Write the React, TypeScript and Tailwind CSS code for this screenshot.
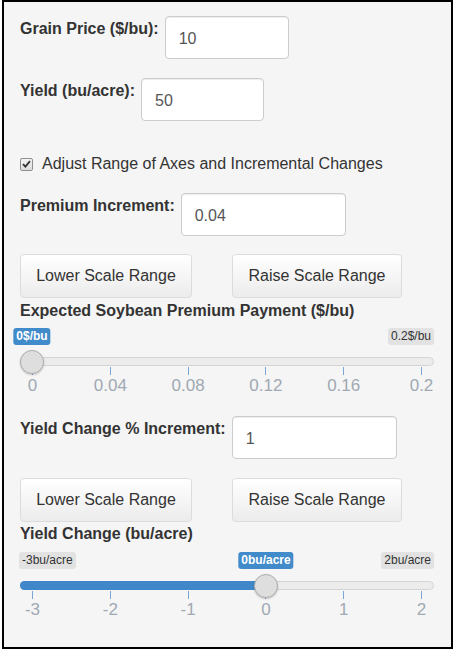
import React from "react";

const FONT = { fontFamily: '"Liberation Sans", Arial, sans-serif' };

// handle travels from 12px to 402px inside a 414px track
const PAD = 12;
const SPAN = 390;

interface FieldRowProps {
  label: string;
  value: string;
  width: string;
  className?: string;
}

function FieldRow({ label, value, width, className = "" }: FieldRowProps) {
  return (
    <div className={`flex items-start gap-[6px] ${className}`}>
      <label className="mt-[3px] text-[16px] leading-[20px] font-bold text-[#333]">{label}</label>
      <div
        className={`h-[43px] ${width} rounded-[4px] border border-[#ccc] bg-white pl-[13px] pt-[2px] flex items-center text-[16px] text-[#555] shadow-[inset_0_1px_1px_rgba(0,0,0,0.075)]`}
      >
        {value}
      </div>
    </div>
  );
}

function ScaleButtons({ className = "" }: { className?: string }) {
  const btn =
    "h-[44px] rounded-[4px] border border-[#dcdcdc] bg-linear-to-b from-white to-[#ececec] text-[16px] text-[#333] flex items-center justify-center";
  return (
    <div className={`flex gap-[40px] ${className}`}>
      <button className={`${btn} w-[172px]`}>Lower Scale Range</button>
      <button className={`${btn} w-[170px]`}>Raise Scale Range</button>
    </div>
  );
}

const badge = "rounded-[3px] px-[3px] text-[12px] leading-[17px] whitespace-nowrap";

interface SliderProps {
  min: number;
  max: number;
  value: number;
  unit: string;
  ticks: string[];
  showMin: boolean;
  filled: boolean;
  className?: string;
}

function Slider({ min, max, value, unit, ticks, showMin, filled, className = "" }: SliderProps) {
  const handleX = PAD + ((value - min) / (max - min)) * SPAN;

  return (
    <div className={`w-[414px] h-[80px] pt-[7px] ${className}`}>
      {/* min / max labels, current value floats over them */}
      <div className="relative flex h-[17px] justify-between">
        <span className={`${badge} ml-[-1px] bg-[#e2e2e2] text-[#333] ${showMin ? "" : "invisible"}`}>
          {min}
          {unit}
        </span>
        <span className={`${badge} bg-[#e2e2e2] text-[#333]`}>
          {max}
          {unit}
        </span>
        <span
          className={`${badge} absolute top-0 -translate-x-1/2 bg-[#428bca] text-[12.5px] font-bold text-white`}
          style={{ left: handleX }}
        >
          {value}
          {unit}
        </span>
      </div>

      {/* track */}
      <div className="relative mt-[12px] h-[9px] rounded-full border border-[#d4d4d4] bg-[#ececec]">
        {filled && (
          <div className="-m-px h-[9px] rounded-l-full bg-[#3f87c8]" style={{ width: handleX }} />
        )}
        <div
          className="absolute top-[-8px] h-[24px] w-[24px] -translate-x-1/2 rounded-full border border-[#aeaeae] bg-[#dedede] shadow-[0_1px_2px_rgba(0,0,0,0.2)]"
          style={{ left: handleX - 1 }}
        />
      </div>

      {/* grid */}
      <div className="mt-px flex justify-between px-[12px]">
        {ticks.map((t) => (
          <div key={t} className="flex w-px flex-col items-center">
            <div className="h-[8px] w-px bg-[#7aa6d6]" />
            <span className="mt-px whitespace-nowrap text-[17px] leading-[20px] text-[#a0a9b3]">{t}</span>
          </div>
        ))}
      </div>
    </div>
  );
}

export default function App() {
  return (
    <div className="bg-white h-[652px] w-[456px]" style={FONT}>
      <div className="ml-[2px] w-[451px] h-[649px] border-2 border-black bg-[#f5f5f5] pl-[16px] pt-[14px]">
        <FieldRow label="Grain Price ($/bu):" value="10" width="w-[124px]" />
        <FieldRow label="Yield (bu/acre):" value="50" width="w-[123px]" className="mt-[19px]" />

        <div className="mt-[33px] flex h-[20px] items-center gap-[9px]">
          <span className="flex h-[13px] w-[13px] items-center justify-center rounded-[2px] border border-[#8f8f8f] bg-linear-to-b from-[#f4f4f4] to-[#dcdcdc]">
            <svg width="9" height="8" viewBox="0 0 9 8">
              <path d="M1 4.2 L3.4 6.6 L8 1.2" fill="none" stroke="#333" strokeWidth="1.8" />
            </svg>
          </span>
          <span className="text-[16px] leading-[20px] text-[#333]">
            Adjust Range of Axes and Incremental Changes
          </span>
        </div>

        <FieldRow label="Premium Increment:" value="0.04" width="w-[165px]" className="mt-[19px]" />
        <ScaleButtons className="mt-[18px]" />

        <div className="mt-[3px] text-[16px] leading-[20px] font-bold text-[#333]">
          Expected Soybean Premium Payment ($/bu)
        </div>
        <Slider
          min={0}
          max={0.2}
          value={0}
          unit="$/bu"
          ticks={["0", "0.04", "0.08", "0.12", "0.16", "0.2"]}
          showMin={false}
          filled={false}
        />

        <FieldRow label="Yield Change % Increment:" value="1" width="w-[165px]" className="mt-[15px]" />
        <ScaleButtons className="mt-[19px]" />

        <div className="mt-[2px] text-[16px] leading-[20px] font-bold text-[#333]">Yield Change (bu/acre)</div>
        <Slider
          min={-3}
          max={2}
          value={0}
          unit="bu/acre"
          ticks={["-3", "-2", "-1", "0", "1", "2"]}
          showMin={true}
          filled={true}
          className="mt-[1px]"
        />
      </div>
    </div>
  );
}
